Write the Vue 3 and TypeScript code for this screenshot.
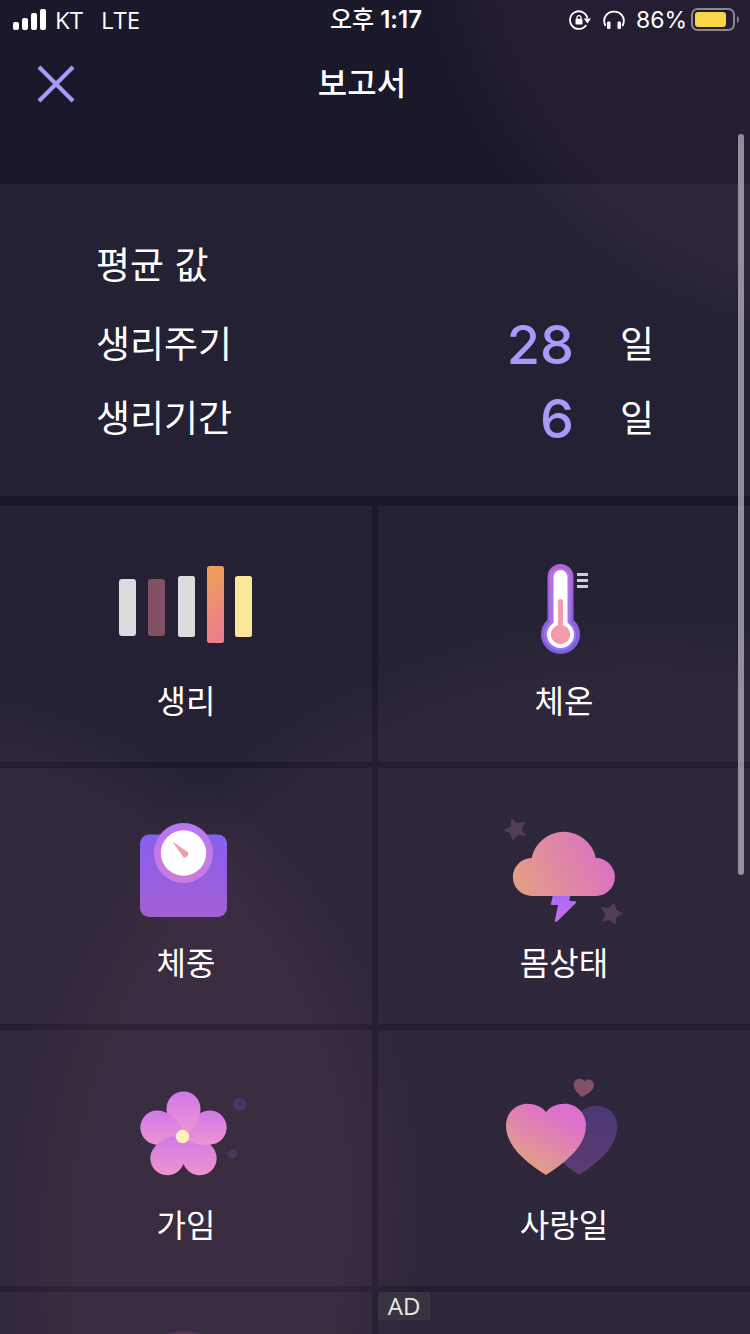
<script setup lang="ts">
type TileKind = 'period' | 'temperature' | 'weight' | 'condition' | 'fertility' | 'love'

interface Tile {
  kind: TileKind
  label: string
}

interface Average {
  label: string
  value: number
  unit: string
}

interface Petal {
  id: string
  angle: number
  top: number
  bottom: number
}

const averages: Average[] = [
  { label: '생리주기', value: 28, unit: '일' },
  { label: '생리기간', value: 6, unit: '일' },
]

const tiles: Tile[] = [
  { kind: 'period', label: '생리' },
  { kind: 'temperature', label: '체온' },
  { kind: 'weight', label: '체중' },
  { kind: 'condition', label: '몸상태' },
  { kind: 'fertility', label: '가임' },
  { kind: 'love', label: '사랑일' },
]

// Listed in paint order: each petal overlaps the one clockwise of it.
const petals: Petal[] = [
  { id: 'petal-low-right', angle: 144, top: -2, bottom: 40 },
  { id: 'petal-right', angle: 72, top: -26, bottom: 10 },
  { id: 'petal-top', angle: 0, top: -44, bottom: -4 },
  { id: 'petal-left', angle: -72, top: -26, bottom: 10 },
  { id: 'petal-low-left', angle: -144, top: -2, bottom: 40 },
]
</script>

<template>
  <div class="screen">
    <div class="status">
      <div class="carrier">
        <svg class="signal" width="34" height="22" viewBox="0 0 34 22" aria-hidden="true">
          <rect x="0" y="13" width="6" height="8" rx="2" />
          <rect x="9" y="9" width="6" height="12" rx="2" />
          <rect x="18" y="4" width="6" height="17" rx="2" />
          <rect x="27" y="0" width="6" height="21" rx="2" />
        </svg>
        <span>KT</span>
        <span class="network">LTE</span>
      </div>
      <div class="time"><span class="meridiem">오후</span> 1:17</div>
      <div class="indicators">
        <svg width="22" height="20" viewBox="0 0 22 20" aria-hidden="true">
          <path d="M17.2 14.9A8.800 8.800 0 1 1 18.400 8.200" fill="none" stroke="#fff" stroke-width="1.800" />
          <path d="M14.800 8.600H22L18.400 13.400Z" fill="#fff" />
          <rect x="6.500" y="8.800" width="7" height="5.600" rx="1" fill="#fff" />
          <path d="M8 9V7.600a2 2 0 0 1 4 0V9" fill="none" stroke="#fff" stroke-width="1.200" />
        </svg>
        <svg class="phones" width="22" height="20" viewBox="0 0 22 20" aria-hidden="true">
          <path d="M2.600 16C.8 12.500.6 8.500 3 5.400 5 2.800 7.800 1.700 11 1.700s6 1.100 8 3.700c2.400 3.100 2.200 7.100.4 10.600" fill="none" stroke="#fff" stroke-width="1.800" />
          <rect x="4" y="11.500" width="3.500" height="7.500" rx="1.200" fill="#fff" />
          <rect x="14.500" y="11.500" width="3.500" height="7.500" rx="1.200" fill="#fff" />
        </svg>
        <span class="percent">86%</span>
        <svg class="battery" width="48" height="24" viewBox="0 0 48 24" aria-hidden="true">
          <rect x="1" y="1" width="42" height="21" rx="5.500" fill="none" stroke="#8b8692" stroke-width="2" />
          <rect x="4" y="4" width="31" height="15" rx="3" fill="#f8d648" />
          <path d="M46 8q2 1 2 3.500T46 15z" fill="#8b8692" />
        </svg>
      </div>
    </div>

    <header class="header">
      <button class="close" type="button" aria-label="닫기">
        <svg width="38" height="38" viewBox="0 0 38 38" aria-hidden="true">
          <path d="M2 2L36 36M36 2L2 36" stroke="#a79bf9" stroke-width="4.200" />
        </svg>
      </button>
      <h1>보고서</h1>
    </header>

    <main>
      <section class="summary">
        <h2>평균 값</h2>
        <dl>
          <div v-for="item in averages" :key="item.label" class="row">
            <dt>{{ item.label }}</dt>
            <dd><strong>{{ item.value }}</strong><span>{{ item.unit }}</span></dd>
          </div>
        </dl>
      </section>

      <div class="tiles">
        <button v-for="tile in tiles" :key="tile.kind" class="tile" type="button">
          <svg class="icon" viewBox="0 0 160 120" aria-hidden="true">
            <template v-if="tile.kind === 'period'">
              <defs>
                <linearGradient id="bar" x1="0" y1="0" x2="0.200" y2="1">
                  <stop offset="0" stop-color="#f0a053" />
                  <stop offset="1" stop-color="#ea7f8b" />
                </linearGradient>
              </defs>
              <rect x="13" y="29" width="17" height="57" rx="3" fill="#dcdcdc" />
              <rect x="42" y="29" width="17" height="57" rx="3" fill="#824f64" />
              <rect x="72" y="26" width="17" height="61" rx="2.500" fill="#dcdcdc" />
              <rect x="101" y="16" width="17" height="77" rx="2.500" fill="url(#bar)" />
              <rect x="129" y="26" width="17" height="61" rx="2.500" fill="#fae698" />
            </template>

            <template v-else-if="tile.kind === 'temperature'">
              <defs>
                <linearGradient id="shell" gradientUnits="userSpaceOnUse" x1="0" y1="14" x2="0" y2="104">
                  <stop offset="0" stop-color="#b163d8" />
                  <stop offset="1" stop-color="#7b5de0" />
                </linearGradient>
                <linearGradient id="lining" gradientUnits="userSpaceOnUse" x1="0" y1="16" x2="0" y2="101">
                  <stop offset="0" stop-color="#bd70e6" />
                  <stop offset="1" stop-color="#9375f2" />
                </linearGradient>
              </defs>
              <g fill="url(#shell)">
                <rect x="63.500" y="14" width="26" height="72" rx="13" />
                <circle cx="76.500" cy="84.500" r="19.500" />
              </g>
              <g fill="url(#lining)">
                <rect x="65.500" y="18" width="21" height="66" rx="10.500" />
                <circle cx="76" cy="84.500" r="16" />
              </g>
              <g fill="#fff">
                <rect x="69.500" y="20" width="14" height="62" rx="7" />
                <circle cx="76.500" cy="84.500" r="13.500" />
              </g>
              <g fill="#f39aab">
                <rect x="74" y="49" width="5" height="34" rx="2.500" />
                <circle cx="76.500" cy="84.500" r="9.700" />
              </g>
              <path d="M93 24.500H104M93 30.500H104M93 36.500H104" stroke="#d0cfd3" stroke-width="3" />
            </template>

            <template v-else-if="tile.kind === 'weight'">
              <defs>
                <linearGradient id="scale" x1="0" y1="0" x2="0" y2="1">
                  <stop offset="0" stop-color="#8660ef" />
                  <stop offset="1" stop-color="#a55fd3" />
                </linearGradient>
                <linearGradient id="dial" x1="0" y1="0" x2="0" y2="1">
                  <stop offset="0" stop-color="#b776f2" />
                  <stop offset="1" stop-color="#cd7cdd" />
                </linearGradient>
              </defs>
              <rect x="34" y="22.500" width="87" height="82.500" rx="9" fill="url(#scale)" />
              <ellipse cx="77.500" cy="41" rx="29.500" ry="30" fill="url(#dial)" />
              <circle cx="77.500" cy="41" r="22.700" fill="#fff" />
              <path d="M66.300 29.500L81 39.500A3 3 0 0 1 77 44.500Z" fill="#f39aab" />
            </template>

            <template v-else-if="tile.kind === 'condition'">
              <defs>
                <linearGradient id="cloud" x1="0" y1="0.700" x2="1" y2="0.400">
                  <stop offset="0" stop-color="#e39e84" />
                  <stop offset="1" stop-color="#da70c5" />
                </linearGradient>
                <linearGradient id="bolt" x1="0" y1="0" x2="0" y2="1">
                  <stop offset="0" stop-color="#a56cf4" />
                  <stop offset="1" stop-color="#cb6de9" />
                </linearGradient>
              </defs>
              <path d="M48 84A19 19 0 0 1 47.700 46A32.700 32.700 0 0 1 111.800 46A19 19 0 0 1 112 84Z" fill="url(#cloud)" />
              <g transform="translate(6 -7) scale(0.3333)">
                <path d="M188 273H240L238 287 256 289Q262 290 257 295L202 349Q194 354 195 345L204 300H186Q182 300 183 296Z" fill="url(#bolt)" />
                <path d="M65 40L80 55 106 50 95 74 108 92 84 90 67 108 61 85 40 76 61 65Z" fill="#533c55" />
                <path d="M374 293L379 315 401 325 380 337 376 360 359 345 336 350 346 329 332 306 356 309Z" fill="#533c55" />
              </g>
            </template>

            <template v-else-if="tile.kind === 'fertility'">
              <defs>
                <linearGradient
                  v-for="petal in petals"
                  :id="petal.id"
                  :key="petal.id"
                  gradientUnits="userSpaceOnUse"
                  x1="0"
                  :y1="petal.top"
                  x2="0"
                  :y2="petal.bottom"
                  :gradientTransform="`rotate(${-petal.angle})`"
                >
                  <stop offset="0" stop-color="#cf78e9" />
                  <stop offset="1" stop-color="#ef94cf" />
                </linearGradient>
              </defs>
              <g transform="translate(77.500 62)">
                <path
                  v-for="petal in petals"
                  :key="petal.id"
                  d="M0 0C-8 -5 -17 -14 -17 -27.500A17 17 0 0 1 17 -27.500C17 -17 11 -6 0 2Z"
                  :transform="`rotate(${petal.angle})`"
                  :fill="`url(#${petal.id})`"
                />
              </g>
              <circle cx="76.500" cy="62.500" r="6.700" fill="#fcf0bd" />
              <circle cx="133.500" cy="30.500" r="6.700" fill="#4a355f" />
              <circle cx="126.500" cy="79.500" r="4.700" fill="#4a355f" />
            </template>

            <template v-else>
              <defs>
                <linearGradient id="heart" x1="0.250" y1="0.900" x2="0.700" y2="0.150">
                  <stop offset="0" stop-color="#e2a184" />
                  <stop offset="1" stop-color="#dc70cc" />
                </linearGradient>
                <linearGradient id="heart-back" x1="0" y1="0" x2="0" y2="1">
                  <stop offset="0" stop-color="#4b3876" />
                  <stop offset="1" stop-color="#5d3b70" />
                </linearGradient>
              </defs>
              <g transform="translate(6 -4) scale(0.3333)">
                <path d="M268 131C280 116 298 107 320 107C355 107 382 135 382 170C382 225 333 272 268 315C203 272 154 225 154 170C154 135 181 107 216 107C238 107 257 116 268 131Z" fill="url(#heart-back)" />
                <path d="M168 126C156 110 135 101 112 101C76 101 48 130 48 166C48 225 100 272 168 315C236 272 288 225 288 166C288 130 260 101 224 101C201 101 180 110 168 126Z" fill="url(#heart)" />
                <path d="M284 34C288 29 294 28 300 29C310 32 314 41 311 51C306 65 292 72 276 81C263 71 253 60 251 46C250 35 258 27 267 26C275 26 281 29 284 34Z" fill="#82506a" />
              </g>
            </template>
          </svg>
          <span class="label">{{ tile.label }}</span>
        </button>

        <div class="tile">
          <svg class="icon" viewBox="0 0 160 120" aria-hidden="true">
            <circle cx="78" cy="45" r="50" fill="#543458" />
          </svg>
        </div>
        <div class="tile"><span class="ad">AD</span></div>
      </div>
    </main>
    <div class="scrollbar"></div>
  </div>
</template>

<style>
body {
  margin: 0;
  background: #1a182b;
}
</style>

<style scoped>
.screen {
  position: relative;
  box-sizing: border-box;
  height: 100vh;
  overflow: hidden;
  color: #fff;
  font-family: Inter, "Noto Sans CJK KR", sans-serif;
  background:
    radial-gradient(circle at 850px -80px, rgba(255, 140, 170, 0.046) 360px, rgba(255, 140, 170, 0) 430px),
    radial-gradient(circle at -100px 1200px, rgba(255, 140, 170, 0.056) 450px, rgba(255, 140, 170, 0) 525px),
    radial-gradient(circle at 640px 1250px, rgba(255, 140, 170, 0.046) 570px, rgba(255, 140, 170, 0) 650px),
    #1a182b;
}

.status {
  display: grid;
  grid-template-columns: 1fr auto 1fr;
  align-items: center;
  height: 40px;
  padding: 0 11px 0 13px;
  font-size: 24px;
}

.carrier,
.indicators {
  display: flex;
  align-items: center;
}

.carrier {
  gap: 8px;
  font-family: "Open Sans", "Noto Sans", sans-serif;
  line-height: 30px;
}

.signal {
  fill: #fff;
}

.network {
  margin-left: 10px;
}

.time {
  font-weight: 600;
  line-height: 30px;
}

.meridiem {
  font-weight: 500;
}

.indicators {
  justify-content: flex-end;
}

.phones {
  margin: 0 11px 0 12px;
}

.percent {
  font-size: 23px;
}

.battery {
  margin-left: 4px;
}

.header {
  display: grid;
  grid-template-columns: 112px 1fr 138px;
  align-items: center;
  height: 88px;
  margin-bottom: 56px;
}

.close {
  display: flex;
  justify-content: center;
  align-items: center;
  height: 88px;
  padding: 0;
  border: 0;
  background: none;
}

h1 {
  margin: 0;
  font-size: 32px;
  font-weight: 500;
  line-height: 48px;
  text-align: center;
}

.summary {
  padding: 58px 96px 40px;
  background: rgba(245, 240, 255, 0.047);
}

h2 {
  margin: 0 0 18px;
  font-size: 37px;
  font-weight: 400;
  line-height: 48px;
}

dl {
  margin: 0;
}

.row {
  display: flex;
  align-items: center;
  justify-content: space-between;
  height: 74px;
  font-size: 37px;
  line-height: 48px;
}

dd {
  display: flex;
  align-items: center;
  gap: 46px;
  margin: 0;
}

strong {
  color: #a79bf9;
  font-size: 54px;
  font-weight: 500;
}

.tiles {
  display: grid;
  grid-template-columns: 1fr 1fr;
  gap: 6px;
  margin-top: 10px;
}

.tile {
  display: flex;
  flex-direction: column;
  align-items: center;
  box-sizing: border-box;
  min-height: 256px;
  padding: 44px 0 36px;
  border: 0;
  color: inherit;
  font: inherit;
  background: rgba(245, 240, 255, 0.047);
}

.icon {
  width: 160px;
  height: 120px;
  overflow: visible;
}

.label {
  margin-top: 8px;
  font-size: 32px;
  line-height: 48px;
}

.ad {
  align-self: flex-start;
  box-sizing: border-box;
  width: 52px;
  height: 28px;
  margin-top: -44px;
  color: #e8e7e9;
  font-family: "Open Sans", "Noto Sans", sans-serif;
  font-size: 24px;
  line-height: 28px;
  text-align: center;
  background: #383341;
}

.scrollbar {
  position: absolute;
  top: 134px;
  right: 6px;
  width: 6px;
  height: 741px;
  border-radius: 3px;
  background: rgba(190, 185, 194, 0.72);
}
</style>
